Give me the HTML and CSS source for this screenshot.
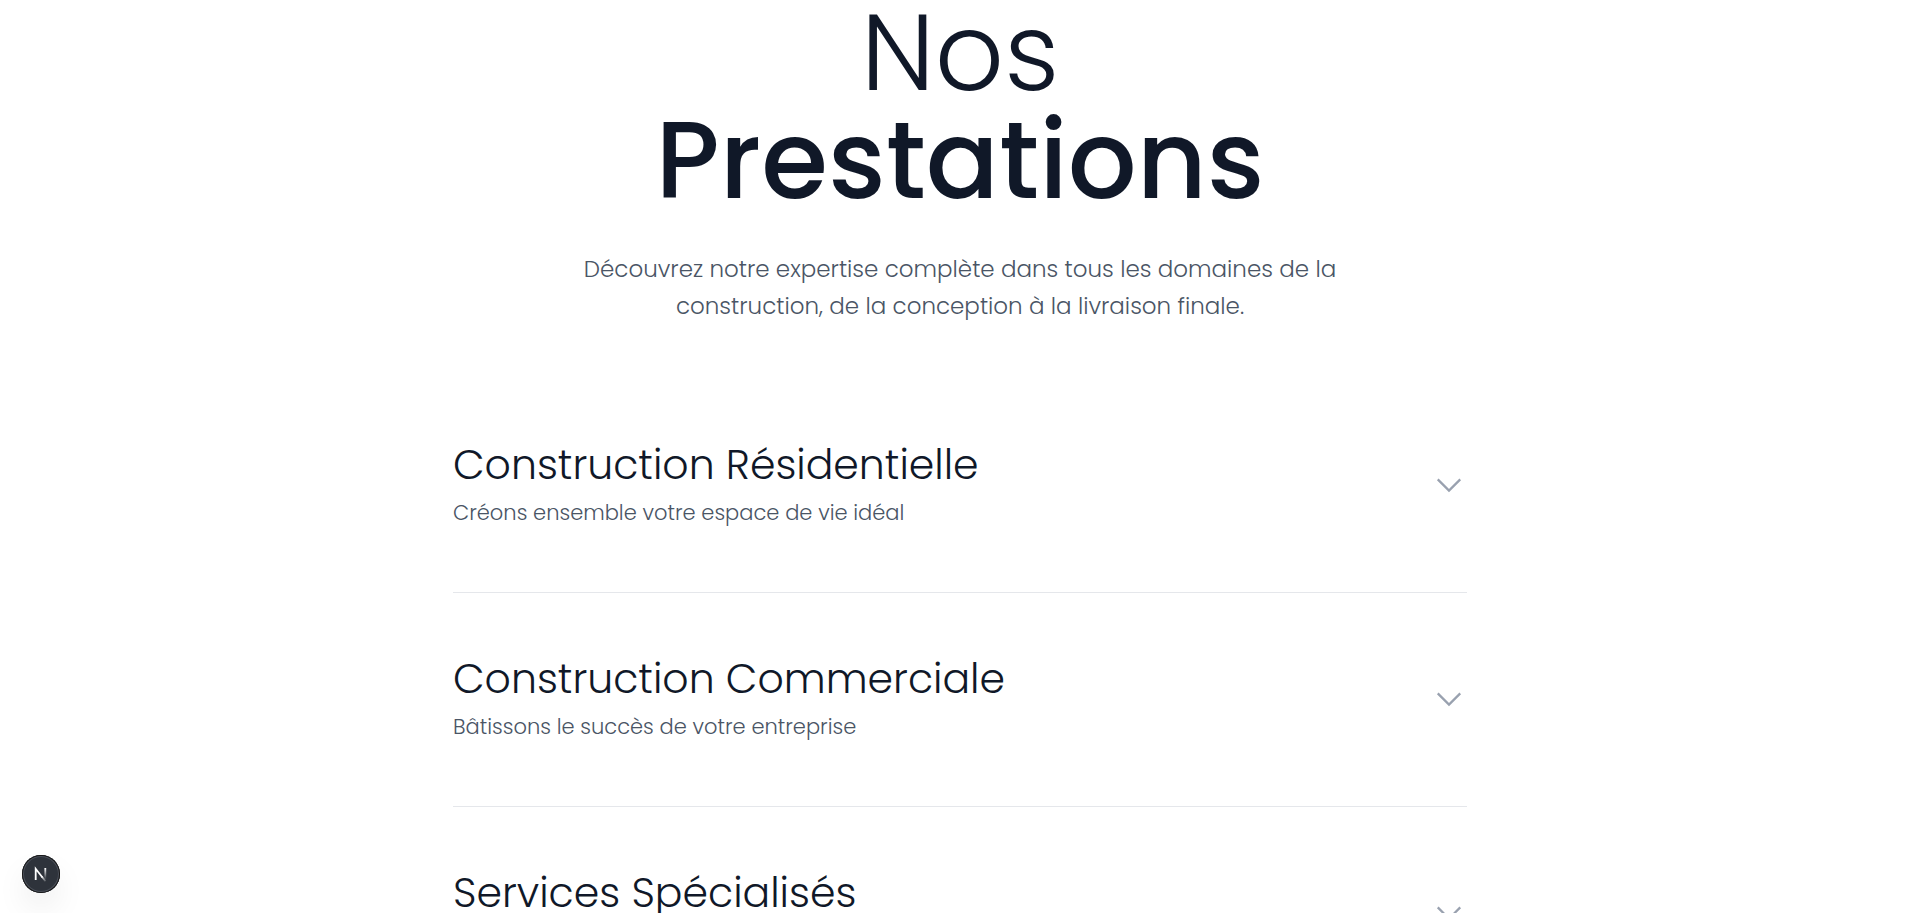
FILE: index.html
```html
<!DOCTYPE html>
<html lang="fr">
<head>
<meta charset="utf-8">
<meta name="viewport" content="width=device-width, initial-scale=1">
<title>Nos Prestations</title>
<link rel="stylesheet" href="styles.css">
</head>
<body>
<main class="services">
  <header class="intro">
    <h1 class="intro-title">Nos <strong class="intro-strong">Prestations</strong></h1>
    <p class="intro-text">Découvrez notre expertise complète dans tous les domaines de la construction, de la conception à la livraison finale.</p>
  </header>
  <div class="accordion">
    <button class="item" type="button" aria-expanded="false">
      <span class="item-body">
        <span class="item-title">Construction Résidentielle</span>
        <span class="item-sub">Créons ensemble votre espace de vie idéal</span>
      </span>
      <svg class="chevron" viewBox="0 0 24 24" aria-hidden="true"><path d="M19.5 8.25l-7.5 7.5-7.5-7.5"/></svg>
    </button>
    <button class="item" type="button" aria-expanded="false">
      <span class="item-body">
        <span class="item-title">Construction Commerciale</span>
        <span class="item-sub">Bâtissons le succès de votre entreprise</span>
      </span>
      <svg class="chevron" viewBox="0 0 24 24" aria-hidden="true"><path d="M19.5 8.25l-7.5 7.5-7.5-7.5"/></svg>
    </button>
    <button class="item" type="button" aria-expanded="false">
      <span class="item-body">
        <span class="item-title">Services Spécialisés</span>
      </span>
      <svg class="chevron" viewBox="0 0 24 24" aria-hidden="true"><path d="M19.5 8.25l-7.5 7.5-7.5-7.5"/></svg>
    </button>
  </div>
</main>
<button class="dev-badge" type="button" aria-label="Next.js">
  <svg class="dev-logo" viewBox="0 0 38 38" aria-hidden="true">
    <defs>
      <linearGradient id="diag" x1="20" y1="20" x2="25" y2="27" gradientUnits="userSpaceOnUse"><stop offset="0" stop-color="#fff"/><stop offset="1" stop-color="#fff" stop-opacity="0"/></linearGradient>
      <linearGradient id="stem" x1="0" y1="13" x2="0" y2="23" gradientUnits="userSpaceOnUse"><stop offset="0" stop-color="#fff"/><stop offset="1" stop-color="#fff" stop-opacity="0.1"/></linearGradient>
    </defs>
    <path d="M13.7 25V13.8L20.5 22.5" fill="none" stroke="#fff" stroke-width="1.8"/>
    <path d="M20 21.8L23.5 26.2" fill="none" stroke="url(#diag)" stroke-width="1.8"/>
    <rect x="22.4" y="13" width="1.8" height="11" fill="url(#stem)"/>
  </svg>
</button>
</body>
</html>
```
FILE: styles.css
```css
* { box-sizing: border-box; }

body {
  margin: 0;
  height: 100vh;
  overflow: hidden;
  background: #fff;
  color: #101828;
  font-family: Poppins, Inter, "Open Sans", sans-serif;
  font-weight: 300;
}

.services {
  max-width: 1014px;
  margin: -1px auto 0;
}

.intro { text-align: center; }

.intro-title {
  margin: 0;
  font-size: 108px;
  line-height: 108px;
  font-weight: 300;
}

.intro-strong {
  display: block;
  font-weight: 500;
}

.intro-text {
  max-width: 800px;
  margin: 36px auto 54px;
  font-size: 23px;
  line-height: 37px;
  color: #4a5565;
}

.item {
  display: flex;
  justify-content: space-between;
  align-items: center;
  width: 100%;
  padding: 59px 0 60px;
  border: 0;
  border-bottom: 1px solid #e5e7eb;
  background: none;
  color: inherit;
  font: inherit;
  text-align: left;
}

.item-body {
  display: flex;
  flex-direction: column;
  gap: 4px;
  min-height: 94px;
}

.item-title {
  font-size: 41px;
  line-height: 54px;
}

.item-sub {
  font-size: 21px;
  line-height: 34px;
  color: #4a5565;
}

.chevron {
  width: 36px;
  height: 36px;
  fill: none;
  stroke: #99a1af;
  stroke-width: 1.5;
}

.dev-badge {
  position: fixed;
  left: 22px;
  bottom: 20px;
  width: 38px;
  height: 38px;
  padding: 0;
  border: 0;
  border-radius: 50%;
  background: #2e333b;
  box-shadow: inset 0 0 0 1px #171717, inset 0 0 0 2px #4b505a, 0 16px 32px -4px rgba(0, 0, 0, 0.1);
}

.dev-logo {
  display: block;
  width: 38px;
  height: 38px;
}
```
